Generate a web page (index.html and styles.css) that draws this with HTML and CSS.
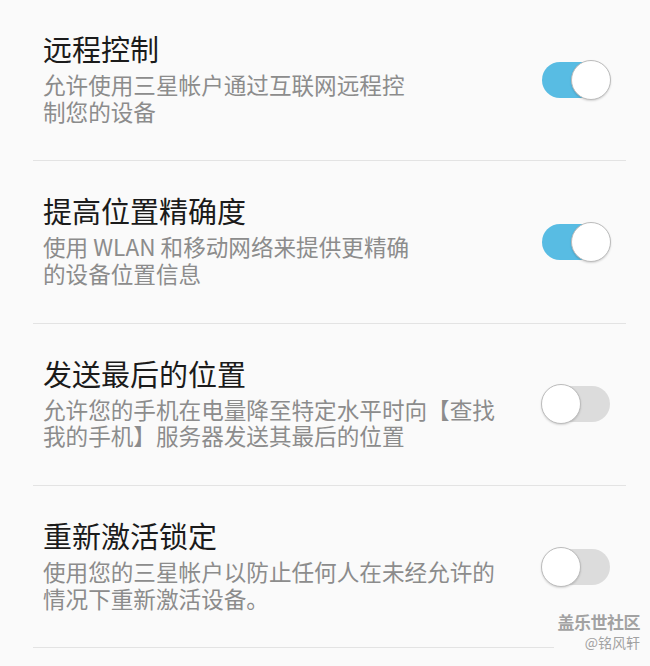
FILE: index.html
```html
<!DOCTYPE html>
<html lang="zh-CN">
<head>
  <meta charset="UTF-8" />
  <meta name="viewport" content="width=device-width, initial-scale=1.0"/>
  <title>查找我的手机</title>

  <link rel="stylesheet" href="styles.css">
</head>

<body>
  <div class="list">
    <div class="item">
      <div class="text">
        <div class="title">远程控制</div>
        <div class="desc">允许使用三星帐户通过互联网远程控<br>制您的设备</div>
      </div>
      <div class="toggle on"><span class="thumb"></span></div>
    </div>

    <div class="item">
      <div class="text">
        <div class="title">提高位置精确度</div>
        <div class="desc">使用 WLAN 和移动网络来提供更精确<br>的设备位置信息</div>
      </div>
      <div class="toggle on"><span class="thumb"></span></div>
    </div>

    <div class="item">
      <div class="text">
        <div class="title">发送最后的位置</div>
        <div class="desc">允许您的手机在电量降至特定水平时向【查找<br>我的手机】服务器发送其最后的位置</div>
      </div>
      <div class="toggle"><span class="thumb"></span></div>
    </div>

    <div class="item">
      <div class="text">
        <div class="title">重新激活锁定</div>
        <div class="desc">使用您的三星帐户以防止任何人在未经允许的<br>情况下重新激活设备。</div>
      </div>
      <div class="toggle"><span class="thumb"></span></div>
    </div>
  </div>

  <div class="watermark">
    <div class="wm-name">盖乐世社区</div>
    <div class="wm-user">@铭风轩</div>
  </div>
</body>
</html>
```

FILE: styles.css
```css
body {
  font-family: "Noto Sans CJK SC", "Noto Sans", sans-serif;
  background: #fafafa;
  color: #1c1c1c;
  margin: 0;
  padding: 0;
  width: 650px;
  height: 666px;
  overflow: hidden;
  position: relative;
}

.list {
  margin: -1px 24px 0 33px;
}

.item {
  display: flex;
  align-items: center;
  justify-content: space-between;
  height: 161.3px;
  border-bottom: 1.5px solid #e3e3e3;
  padding: 0 16px 0 10px;
}

.text {
  display: flex;
  flex-direction: column;
  padding-bottom: 4px;
}

.title {
  font-size: 29px;
  line-height: 36px;
  color: #1b1b1b;
}

.desc {
  margin-top: 6px;
  font-size: 22.6px;
  line-height: 26.5px;
  color: #8c8c8c;
  white-space: nowrap;
}

/* switch */
.toggle {
  position: relative;
  width: 68px;
  height: 36px;
  border-radius: 18px;
  background: #dcdcdc;
  flex-shrink: 0;
}

.toggle.on {
  background: #58bce3;
}

.thumb {
  position: absolute;
  top: -2px;
  left: -1px;
  width: 38px;
  height: 38px;
  border-radius: 50%;
  background: #fff;
  border: 1px solid #bcbcbc;
  box-shadow: 0 1px 2px rgba(0, 0, 0, 0.15);
}

.toggle.on .thumb {
  left: auto;
  right: -1px;
}

/* watermark */
.watermark {
  position: absolute;
  right: 10px;
  bottom: 15px;
  text-align: right;
  color: #a2a2a2;
  background: #fafafa;
  padding-left: 4px;
}

.wm-name {
  font-size: 17px;
  line-height: 22px;
  font-weight: bold;
  letter-spacing: -0.5px;
}

.wm-user {
  font-size: 14px;
  line-height: 18px;
}
```
